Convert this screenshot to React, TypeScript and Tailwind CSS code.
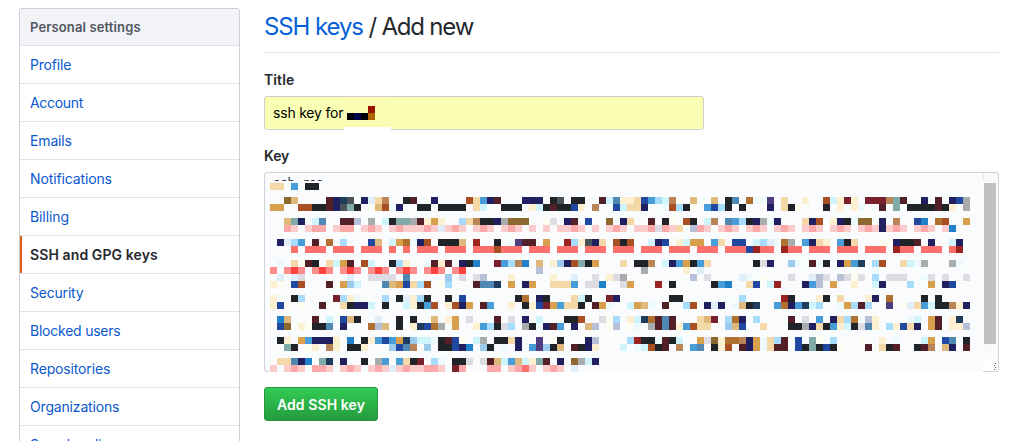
import React from "react";

const palette: Record<string, string> = {
  K: "#202428", N: "#202060", n: "#203c5c", M: "#542028", B: "#2048a0", b: "#489cd8",
  u: "#2080c8", s: "#5088b4", l: "#a8dcfc", c: "#d0f4fc", p: "#ecfafc", O: "#b07030",
  R: "#a85024", T: "#deb87c", G: "#d8a04c", t: "#f4d8a8", y: "#fcf0d0", i: "#fcfcf0",
  e: "#dcdce2", g: "#a8acac", d: "#4a5458", a: "#80aaa8", P: "#fccccc", Q: "#fba8a8",
  S: "#ff706c", F: "#ff443f", f: "#ff8c8c", r: "#9c2420", m: "#78202c", w: "#e0eefa",
  h: "#b88458", U: "#8c6830", z: "#9ccaec", x: "#b8c0d8", V: "#503c80",
};

const CELL = 7;

// Each entry is a grid row index followed by its cells.
const mosaic: [number, string][] = [
  [0, "tt.b.KK"],
  [2, "..UT....MNnd.Nwth..KM" + "..N....RtbNM...NNN.Kd" + ".KK..McsyytBblchi.T.." + "T.Ks.OppV.t..y..Rcymy" + ".mmmhaM..N.M.NBg"],
  [3, "GG..RRKKMNdaK.iTRpN.." + "KK.KKKK.tc..KKK.ycKMK" + "KBy.h..BcttN..pRlKi.b" + "BlK.K...N.tKi...K.y.y" + "p..M.a.KKKKMKy.g"],
  [5, "..TaN.cs..MMx.g.cKaag" + "MyGy..lthKKNgUUU..ie." + "NM.B..U.Nt..M.Ki.RK.c" + "h.sblKNgpN...tNR.yNKp" + "UU.N.h..Bu.OR..G"],
  [6, "..QP.PQQ.PQQ.PQP.PQPP" + "PQPwPQP.PQP.PQP.P.P.P" + "PQP.P.PQP.PPQeQPt.xQP" + ".PQP.PQP.PQP.PQP.PQP." + "PQPNPQP.PQP.Pu.."],
  [8, ".Nwlb.M.O.l...BT.cGOp" + "NR.KKKT.r..K.pVMM.G.." + "rlydNt.RKR..cNB.ycGG." + "bt.BB.clwpOg.bNty.bKt" + "...iiNKKM.N..cN."],
  [9, "...S.SSS.SSS.SSS.S.S." + "SSS.SSS.SSSRSSS.SSS.S" + "SS.SSS.SSS.SSS.SSS.SS" + "S.SSSBrSS.rSS.SSS.SSS" + ".SSS.rSS.SSS.Sr."],
  [11, ".p.tiMK.tcGM.Rc..Kly." + ".pMyM.NKu..mblhu.T.yz" + "NRaKG...t.KKh.cNbGKbt" + "......KeN..zp.MpK.NGb" + "n.lR..tcpg...gp."],
  [12, "f.fFf.fFf.fFf.fFf.fFf" + ".fFf.fF..........x..." + "...........g.....y.w." + "....................." + "..p............."],
  [13, ".w.we......w..eeee.s." + "....z.e.ex...y.....y." + ".w..e.yeg.........x.e" + "....wp.i...e..wxe.xei" + "e.l.eee..pe.e..e"],
  [14, "yi.BR...M.Gzc...sTGBt" + "lR.il...Mssn.G.NG..tt" + "tb.eeu..eG...r.K....." + "Kbu..tB.cr...Nbx.G..y" + "..cN...l..G.NB.."],
  [16, "y..Kl....mlyp...l.Kwy" + "lK..K.B.......KO.NK.." + ".tcK..mN.......KK...." + "....l.....rK...yK.t.." + ".yN.O....K.K...."],
  [17, "yBi.i..M..tKNNc.K..cy" + "KbR.yRNG.Mb..y.KyBmGb" + "ttK.MGp..cGTp.M..lR.N" + "wN.pTKn..bONbncl..pGl" + "Ml..V.iwtbcKKhyN"],
  [19, ".uT...M.c.BTK..w..K.K" + "..T.yG.e...M.e.N.c..." + "KKR..eil.ycnOMsM...tT" + "m.lON.l....M.e.b.NtlO" + ".xy....pc.GM.yn."],
  [20, "iBU.yiKKs.N...OxT.K.y" + "nBOg.G..yblKel.gKpNMb" + ".N.Tx.ix.ip.gMsMybRtt" + "..zTB..t...KKgNtKbycK" + "esy.lyBtN.GM.yyx"],
  [22, ".Ky.GbNNNy.u.KybBbGnz" + "ccpKMBi.cg.KKtN..V.iK" + "...Nx....lrKKpMKc..Ge" + "UyOOhNGptlM.B.ai.l..." + "i..y.p...cG.Bs.K"],
  [23, "..aK.iy.hy.KKy...zBsh" + ".z.KKBNu.zK.p.N.bVzKT" + ".MKNy...c.pcRKM.h.bs." + "KyR.MNGptMM.BKaKBKi.." + ".M.tKM..KMh.TN.M"],
  [25, ".ttsNu.an.N..K.gb.btK" + "m.lp.KKe.eMTcbTcyaM.N" + ".UgcN"],
  [26, "P.PQP.QQP.PQP.PQPwPQP" + "PQQP.mQ...QQ.PQSP.PQP" + ".w"],
];

function Mosaic() {
  return (
    <svg width="714" height="192" viewBox="0 0 714 192" shapeRendering="crispEdges" className="absolute top-[8px] left-[4px]">
      <rect width="714" height="191" fill="#fafbfd" />
      {mosaic.flatMap(([row, cells]) =>
        cells.split("").map((key, col) =>
          key === "." ? null : (
            <rect key={`${row}-${col}`} x={1 + col * CELL} y={2 + row * CELL} width={CELL} height={CELL} fill={palette[key]} />
          ),
        ),
      )}
    </svg>
  );
}

const menu: [string, string][] = [
  ["Profile", "tracking-[-0.2px]"],
  ["Account", "tracking-[-0.3px]"],
  ["Emails", "tracking-[-0.15px]"],
  ["Notifications", "tracking-[-0.13px]"],
  ["Billing", "tracking-[-0.1px]"],
  ["SSH and GPG keys", "tracking-[0.1px]"],
  ["Security", "tracking-[-0.2px]"],
  ["Blocked users", "tracking-[-0.23px]"],
  ["Repositories", "tracking-[-0.15px]"],
  ["Organizations", "tracking-[-0.17px]"],
  ["Saved replies", "tracking-[-0.2px]"],
];

function Sidebar() {
  return (
    <nav className="mt-2 ml-[19px] w-[221px] shrink-0 self-start rounded-[3px] border border-[#cdd0d8] bg-white">
      <h3 className="h-[37px] rounded-t-[2px] border-b border-[#dfe1e7] bg-[#f1f3f7] pl-[10px] text-[13px] leading-[37px] font-semibold text-[#52575f]">
        <span className="tracking-[0.13px]">Personal settings</span>
      </h3>
      {menu.map(([label, tracking]) => {
        const active = label === "SSH and GPG keys";
        return (
          <a
            key={label}
            className={`block h-[38px] border-b border-[#dfe1e7] text-[14px] leading-[37px] ${
              active ? "font-semibold text-[#24292e]" : "text-[#0a58ce]"
            }`}
          >
            <span className={`block h-[37px] ${active ? "border-l-2 border-[#e05d11] pl-2" : "pl-[10px]"} ${tracking}`}>{label}</span>
          </a>
        );
      })}
    </nav>
  );
}

export default function App() {
  return (
    <div className="flex h-[441px] w-[1033px] overflow-hidden bg-white font-['Inter','Liberation_Sans',sans-serif] text-[14px] text-[#24292e]">
      <Sidebar />
      <main className="ml-6 flex w-[735px] flex-col items-start">
        <h2 className="h-[53px] w-full border-b border-[#dfe1e7] pt-[9px] text-[24px] leading-9">
          <span className="tracking-[-1.2px]">
            <a className="tracking-[-1.1px] text-[#0561d8]">SSH keys</a> / Add new
          </span>
        </h2>
        <label className="mt-[17px] h-5 leading-5 font-semibold">
          <span className="tracking-[0.1px]">Title</span>
        </label>
        <div className="relative mt-[6px] h-[34px] w-[440px] rounded-[3px] border border-[#cdd0cf] bg-[#faffb4] pl-2 leading-[32px] text-black">
          <span className="tracking-[-0.2px]">ssh key for</span>
          <svg width="47" height="34" viewBox="0 0 47 34" shapeRendering="crispEdges" className="absolute top-0 left-[79px]">
            <rect y="2" width="47" height="29" fill="#fbfcb4" />
            <rect y="30" width="47" height="4" fill="#ffffff" />
            <rect x="3" y="16" width="7" height="7" fill="#000000" />
            <rect x="10" y="16" width="7" height="7" fill="#000848" />
            <rect x="17" y="16" width="7" height="7" fill="#000000" />
            <rect x="24" y="9" width="7" height="7" fill="#981400" />
            <rect x="24" y="16" width="7" height="7" fill="#ac6400" />
          </svg>
        </div>
        <label className="mt-4 h-5 leading-5 font-semibold">
          <span className="tracking-[-0.1px]">Key</span>
        </label>
        <div className="relative mt-[6px] flex h-[200px] w-full shrink-0 justify-between rounded-[3px] border border-[#cdd1d8] bg-[#fafbfd]">
          <span className="pt-[1px] pl-2 font-['DejaVu_Sans_Mono','Liberation_Mono',monospace] text-[12px] leading-[18px] text-[#24292e]">ssh-rsa</span>
          <Mosaic />
          <div className="mr-[2px] flex w-[13px] flex-col bg-[#fafafa]">
            <div className="h-[8px] border-l border-[#e8e8e8]" />
            <div className="mt-[2px] ml-[1px] h-[161px] w-[12px] bg-[#c1c1c1]" />
            <div className="h-[15px]" />
            <div className="relative h-[12px] bg-white">
              <svg width="4" height="9" className="absolute top-[3px] left-[10px]" shapeRendering="crispEdges">
                <path d="M2 1h1v1h-1zM1 3h1v1h-1zM2 5h1v1h-1zM1 7h1v1h-1z" fill="#505050" />
              </svg>
            </div>
          </div>
        </div>
        <button className="mt-[15px] h-[34px] w-[114px] shrink-0 rounded-[3px] border border-[#259340] bg-linear-to-b from-[#34d058] from-[-10%] to-[#249c3d] font-semibold text-white">
          <span className="tracking-[0.1px]">Add SSH key</span>
        </button>
      </main>
    </div>
  );
}
